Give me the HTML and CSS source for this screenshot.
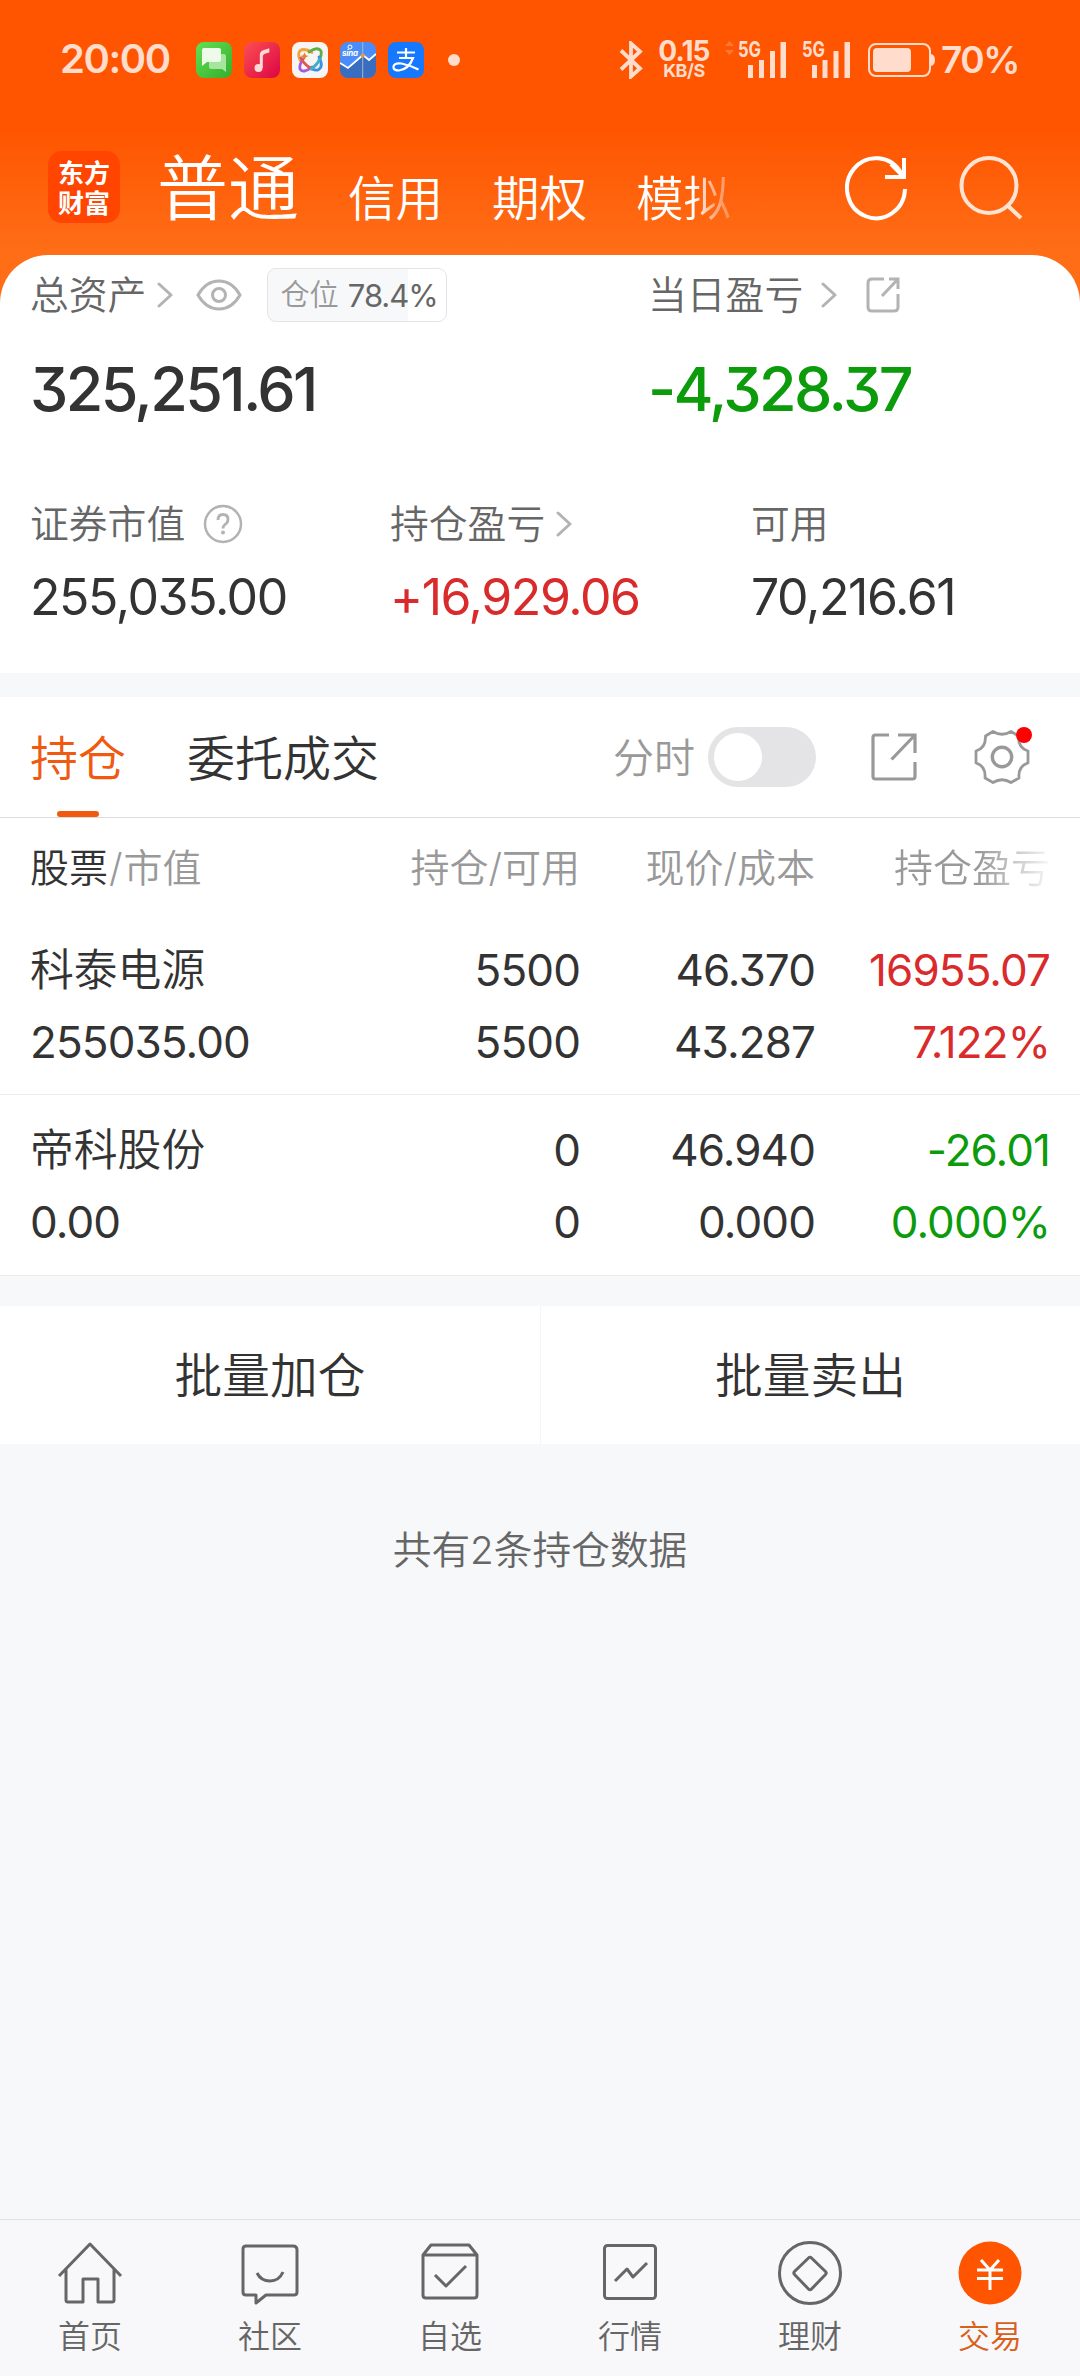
FILE: index.html
```html
<!DOCTYPE html>
<html lang="zh-CN">
<head>
<meta charset="utf-8">
<title>普通交易</title>
<link rel="stylesheet" href="styles.css">
</head>
<body>
<div class="app">
  <header class="top">
    <div class="status">
      <span class="clock">20:00</span>
      <div class="notes">
        <svg width="36" height="36" viewBox="0 0 36 36"><defs><linearGradient id="gm" x2="1" y2="1"><stop stop-color="#62e052"/><stop offset="1" stop-color="#35ad2b"/></linearGradient></defs><rect width="36" height="36" rx="8" fill="url(#gm)"/><path d="M15 12h13q2 0 2 2v16l-4-3H15q-2 0-2-2V14q0-2 2-2z" fill="#a5e59e"/><path d="M8 6h15q2 0 2 2v10q0 2-2 2H11l-5 4V8q0-2 2-2z" fill="#eefbea"/></svg>
        <svg width="36" height="36" viewBox="0 0 36 36"><defs><linearGradient id="gr" x2="1" y2="1"><stop stop-color="#fc5052"/><stop offset="1" stop-color="#dc0445"/></linearGradient></defs><rect width="36" height="36" rx="8" fill="url(#gr)"/><circle cx="14.500" cy="26" r="4" fill="#ffd9d8"/><path d="M15.800 26V13q0-4 4-5l5.500-1.800v4.300l-4.500 1.300q-2 .6-2 3V26z" fill="#ffd9d8"/></svg>
        <svg width="36" height="36" viewBox="0 0 36 36"><rect width="36" height="36" rx="8" fill="#f6f5f3"/><g fill="none" stroke-width="2.800" stroke-linecap="round"><path d="M8 18Q4 8 12 7.500q4 0 8 3" stroke="#f3a33a"/><path d="M17 10q9-6 12-1 1 4-2 9" stroke="#5fae45"/><path d="M27 15q5 10-1 13-4 1-9-3" stroke="#3a8fe8"/><path d="M20 25q-9 7-12 2-1-4 3-10" stroke="#a35be0"/><path d="M9 16Q11 21 18 26" stroke="#e0554c"/><path d="M28 17Q25 23 19 27" stroke="#3fb0c0"/></g><path d="M12.500 10.500l1.300 2.700 2.700.8-2.700 1.200-1.300 2.800-1.300-2.800-2.700-1.200 2.700-.8z" fill="#ee7a2b"/></svg>
        <svg width="36" height="36" viewBox="0 0 36 36"><defs><clipPath id="cs"><rect width="36" height="36" rx="8"/></clipPath></defs><g clip-path="url(#cs)"><rect width="36" height="36" fill="#4b8df8"/><path d="M0 21l8 5 15-13 6 5 7-6v24H0z" fill="#396dc0"/><path d="M0 21l8 5 15-13 6 5 7-6" fill="none" stroke="#fff" stroke-width="1.800"/><path d="M22.700 0v36" stroke="#a9b7c2" stroke-width="1"/><circle cx="22.700" cy="13.500" r="2" fill="#f29a1f"/><circle cx="10" cy="5" r="2" fill="none" stroke="#fff"/><text x="2" y="13.500" font-size="8" font-weight="700" font-style="italic" fill="#fff" textLength="16">sina</text></g></svg>
        <svg width="36" height="36" viewBox="0 0 36 36"><rect width="36" height="36" rx="8" fill="#1677ff"/><g fill="none" stroke="#fff" stroke-width="2.200"><path d="M9 10.500h18M18 6v10M11 16h14Q21 27 11 28.500q-6 0-5.500-4 1-4 8-3 9 2 17 6"/></g></svg>
      </div>
      <i class="more"></i>
      <div class="signals">
        <svg class="bt" width="24" height="38" viewBox="0 0 24 38" fill="none" stroke="#ffdccb" stroke-width="3.800"><path d="M2 9.500l19 18-9 8V2.500l9 8-19 18"/></svg>
        <div class="speed"><b>0.15</b><small>KB/S</small></div>
        <svg class="cell" width="62" height="40" viewBox="0 0 62 40"><path d="M0 6l4.500-5L9 6zM0 10h9l-4.500 5z" fill="#ff7a3a"/><text x="13" y="16.500" textLength="23" lengthAdjust="spacingAndGlyphs">5G</text><path d="M23 25h5v13h-5zM34 20h5v18h-5zM45 11h5v27h-5zM55.500 2h5.500v36h-5.500z"/></svg>
        <svg class="cell two" width="50" height="40" viewBox="0 0 50 40"><text x="1" y="16.500" textLength="23" lengthAdjust="spacingAndGlyphs">5G</text><path d="M11 25h5v13h-5zM21.500 20h5v18h-5zM32.500 11h5v27h-5zM43.500 2h5.500v36h-5.500z"/></svg>
        <svg class="batt" width="67" height="34" viewBox="0 0 67 34"><rect x="1" y="1" width="61" height="32" rx="7" fill="none" stroke="#ffdccb" stroke-width="2"/><rect x="5" y="5" width="38" height="24" rx="4" fill="#ffdccb"/><path d="M63 11q4 1 4 6t-4 6z" fill="#ffdccb"/></svg>
        <span class="pct">70%</span>
      </div>
    </div>
    <nav class="accounts">
      <div class="logo"><span>东方</span><span>财富</span></div>
      <b class="now">普通</b><span class="a1">信用</span><span class="a2">期权</span><span class="a3">模拟</span>
      <svg class="reload" width="64" height="66" viewBox="0 0 64 66" fill="none" stroke="#fff" stroke-width="4"><path d="M60 34A29 30 0 1 1 56 18"/><path d="M59 3v19H40M46 9L58 21"/></svg>
      <svg class="find" width="64" height="66" viewBox="0 0 64 66" fill="none" stroke="#ffe3d2" stroke-width="4"><circle cx="30" cy="30.500" r="27.500"/><path d="M48 50l14 13"/></svg>
    </nav>
  </header>

  <section class="assets">
    <div class="pair">
      <div class="total">
        <div class="label"><span>总资产</span><svg class="chev c1" width="17" height="26" viewBox="0 0 17 26"><path d="M2 2l12 11L2 24"/></svg>
          <svg class="eye" width="46" height="32" viewBox="0 0 46 32" fill="none" stroke="#b3b3b3" stroke-width="3"><path d="M2 16Q10 2 23 2t21 14Q36 30 23 30T2 16z"/><circle cx="23" cy="16" r="6.500"/></svg>
          <span class="ratio"><em>仓位</em><b>78.4%</b></span></div>
        <div class="big">325,251.61</div>
      </div>
      <div class="today">
        <div class="label"><span>当日盈亏</span><svg class="chev c2" width="17" height="26" viewBox="0 0 17 26"><path d="M2 2l12 11L2 24"/></svg>
          <svg class="out" width="34" height="36" viewBox="0 0 34 36" fill="none" stroke="#b3b3b3" stroke-width="3"><path d="M18 2H6Q2 2 2 6v24q0 4 4 4h22q4 0 4-4V17M23 2h9v10M32 2L16 19"/></svg></div>
        <div class="big down">-4,328.37</div>
      </div>
    </div>
    <div class="trio">
      <div><div class="label"><span>证券市值</span><svg class="help" width="40" height="40" viewBox="0 0 40 40" fill="none" stroke="#b3b3b3" stroke-width="2.500"><circle cx="20" cy="20" r="18"/><path d="M15 16q0-5.500 5-5.500t5 5q0 3-3 5-2 1.500-2 4" stroke-width="2.800"/><circle cx="20" cy="28.500" r="1" stroke-width="2"/></svg></div><div class="mid">255,035.00</div></div>
      <div><div class="label"><span>持仓盈亏</span><svg class="chev c3" width="17" height="26" viewBox="0 0 17 26"><path d="M2 2l12 11L2 24"/></svg></div><div class="mid up">+16,929.06</div></div>
      <div><div class="label"><span>可用</span></div><div class="mid">70,216.61</div></div>
    </div>
  </section>

  <section class="panel">
    <div class="tabs">
      <span class="tab on">持仓</span><span class="tab">委托成交</span>
      <span class="mode">分时</span><i class="switch"></i>
      <svg class="export" width="46" height="48" viewBox="0 0 46 48" fill="none" stroke="#999" stroke-width="3.200"><path d="M18 2H4.500Q2 2 2 4.500v39Q2 46 4.500 46h37q2.500 0 2.500-2.500V29M27 2h17v18M44 2L20.500 26.500"/></svg>
      <span class="gear"><svg width="56" height="56" viewBox="0 0 56 56" fill="none" stroke="#999" stroke-width="2.800"><path d="M19 2.500Q28 8 37 2.500L44.500 7Q44 19 54 22v12Q44 37 45 49L37 53.500Q28 48 19 53.500L11 49Q12 37 2 34V22Q12 19 11.500 7z" stroke-linejoin="round"/><circle cx="28" cy="28" r="9.700" stroke-width="3.400"/></svg></span>
    </div>
    <div class="grid head"><span><b>股票</b><i>/</i>市值</span><span>持仓/可用</span><span>现价/成本</span><span class="fade">持仓盈亏</span></div>
    <div class="grid row first">
      <span class="name">科泰电源</span><span>5500</span><span>46.370</span><span class="up">16955.07</span>
      <span>255035.00</span><span>5500</span><span>43.287</span><span class="up">7.122%</span>
    </div>
    <div class="grid row">
      <span class="name">帝科股份</span><span>0</span><span>46.940</span><span class="down">-26.01</span>
      <span>0.00</span><span>0</span><span>0.000</span><span class="down">0.000%</span>
    </div>
  </section>

  <div class="actions"><span>批量加仓</span><span>批量卖出</span></div>
  <p class="count">共有2条持仓数据</p>

  <nav class="bottom">
    <a><svg viewBox="0 0 66 66"><path d="M2 36L33 4l31 32M9 29v31q0 2 2 2h15V39h15v23h14q2 0 2-2V29"/></svg>首页</a>
    <a><svg viewBox="0 0 66 66"><path d="M8 6h48q4 0 4 4v42q0 3-3 3H29l-10 8v-8H9q-3 0-3-3V9q0-3 3-3M20 33q4 8 13 8t13-9"/></svg>社区</a>
    <a><svg viewBox="0 0 66 66"><path d="M6 15l8-10h38l8 10v40q0 3-3 3H9q-3 0-3-3zM6 15h54M18 35l11 11 20-20"/></svg>自选</a>
    <a><svg viewBox="0 0 66 66"><rect x="7.500" y="5.500" width="51" height="53" rx="3"/><path d="M18 41l12-12 6 8 14-14"/></svg>行情</a>
    <a><svg viewBox="0 0 66 66"><circle cx="33" cy="33" r="30.500"/><path d="M31.500 18q1.500-1.500 3 0l14 13.500q1.500 1.500 0 3L34.500 49q-1.500 1.500-3 0L17.500 34.500q-1.500-1.500 0-3z"/></svg>理财</a>
    <a class="on"><svg viewBox="0 0 66 66"><circle cx="33" cy="33" r="31.500"/><path d="M24 20l9 10 9-10M20 30h26M20 38.500h26M33 30v20"/></svg>交易</a>
  </nav>
</div>
</body>
</html>
```
FILE: styles.css
```css
* { box-sizing: border-box; }
body { margin: 0; }
.app {
  width: 1080px; height: 2376px; display: flex; flex-direction: column;
  background: #f7f8fa; color: #333; overflow: hidden;
  font-family: Inter, "Noto Sans CJK SC", sans-serif;
  font-feature-settings: "cv09";
  font-weight: 350; line-height: 1; white-space: nowrap;
}
svg { display: block; flex: none; }
b, em, small, i { font-weight: inherit; font-style: normal; }
.up { color: #d92b2b; }
.down { color: #0b9b0b; }

.top { height: 303px; background: linear-gradient(#ff5500 0 130px, #ff6d17 250px); flex: none; }
.status { height: 120px; display: flex; align-items: center; padding-left: 60px; color: #ffdccb; }
.clock { width: 136px; font-size: 40px; font-weight: 600; letter-spacing: -1.4px; margin-top: -2px; }
.notes { display: flex; gap: 12px; }
.more { width: 12px; height: 12px; border-radius: 50%; background: #ffdccb; margin-left: 24px; }
.signals { display: flex; align-items: center; margin-left: 159px; }
.speed { display: flex; flex-direction: column; align-items: center; width: 54px; margin-left: 14px; }
.speed b { font-size: 28px; line-height: 22px; font-weight: 700; letter-spacing: -.9px; }
.speed small { font-size: 18px; line-height: 18px; font-weight: 700; letter-spacing: -.5px; }
.cell { margin-left: 14px; fill: #ffdccb; font-size: 22px; font-weight: 700; overflow: visible; }
.batt { margin-left: 17px; }
.pct { font-size: 37px; font-weight: 600; margin-left: 6px; letter-spacing: -1.5px; margin-top: -1px; }

.accounts { height: 135px; display: flex; align-items: flex-start; padding-left: 48px; color: #fff; }
.logo { width: 72px; height: 72px; margin-top: 31px; border-radius: 14px; background: #ff4500; display: flex; flex-direction: column; align-items: center; justify-content: center; font: 700 26px/30px "Noto Sans CJK SC", sans-serif; }
.now { font-size: 71px; line-height: 80px; margin: 28px 0 0 37px; }
.a1, .a2, .a3 { font-size: 47.5px; line-height: 60px; margin: 49px 0 0 49px; }
.a3 { background: linear-gradient(90deg, #fff 60%, #ffb58e 80%, #ff8b4e); background-clip: text; color: transparent; }
.reload { margin: 35px 0 0 114px; }
.find { margin: 35px 0 0 50px; }

.assets { height: 418px; margin-top: -48px; background: #fff; border-radius: 48px 48px 0 0; flex: none; }
.pair { display: grid; grid-template-columns: 618px 1fr; padding: 13px 0 0 30px; }
.label { display: flex; align-items: center; height: 54px; font-size: 38.8px; color: #666; }
.chev { fill: none; stroke: #b3b3b3; stroke-width: 3; stroke-linecap: round; stroke-linejoin: round; }
.c1 { margin-left: 11px; }
.c2 { margin-left: 18px; }
.c3 { margin-left: 11px; }
.eye { margin-left: 22px; }
.ratio { display: flex; align-items: center; width: 180px; height: 54px; margin-left: 25px; padding-left: 12px; border: 1px solid #e4e4e6; border-radius: 9px; background: linear-gradient(90deg, #f7f8fa 78.4%, #fff 78.4%); font-size: 29.2px; }
.ratio em { color: #999; }
.ratio b { font-size: 31px; margin-left: 9px; font-weight: 400; letter-spacing: -1px; }
.out { margin-left: 28px; }
.big { font-size: 61px; line-height: 74px; font-weight: 500; margin-top: 30px; letter-spacing: -2.6px; }
.trio { display: grid; grid-template-columns: 360px 361px 1fr; padding: 71px 0 0 30px; }
.help { margin-left: 18px; }
.mid { font-size: 50px; line-height: 60px; font-weight: 400; margin-top: 16px; letter-spacing: -1.4px; }

.panel { background: #fff; margin-top: 24px; flex: none; }
.tabs { height: 121px; border-bottom: 1px solid #dcdcdc; display: flex; align-items: center; padding-left: 30px; }
.tab { height: 120px; line-height: 123px; font-size: 48px; margin-right: 61px; position: relative; }
.tab.on { color: #f0590f; }
.tab.on::after { content: ""; position: absolute; left: 27px; bottom: 0; width: 42px; height: 6px; border-radius: 3px; background: #f0590f; }
.mode { font-size: 41px; line-height: 62px; padding-top: 2px; color: #999; margin-left: 173px; width: 95px; }
.switch { width: 108px; height: 60px; border-radius: 30px; padding: 6px; background: #e4e4e6; }
.switch::before { content: ""; display: block; width: 48px; height: 48px; border-radius: 50%; background: #fff; }
.export { margin-left: 55px; }
.gear { position: relative; margin-left: 57px; }
.gear::after { content: ""; position: absolute; right: -2px; top: -2px; width: 16px; height: 16px; border-radius: 50%; background: #f00; }
.grid { display: grid; grid-template-columns: 340px 210px 235px 235px; padding: 0 30px; }
.grid > span:not(:nth-child(4n + 1)) { text-align: right; }
.head { height: 98px; line-height: 99px; font-size: 39px; color: #999; }
.head b { color: #333; }
.head i { margin: 0 1px; }
.fade { background: linear-gradient(90deg, #999 70%, #f4f4f4 99%); background-clip: text; color: transparent; }
.row { height: 181px; grid-template-rows: 72px 72px; padding-top: 19px; line-height: 72px; font-size: 44px; font-weight: 400; letter-spacing: -.9px; border-bottom: 1px solid #ececec; }
.row.first { height: 179px; padding-top: 18px; }
.row .name { font-size: 43.8px; line-height: 73px; font-weight: 350; letter-spacing: 0; }

.actions { display: grid; grid-template-columns: 1fr 1fr; height: 138px; margin-top: 30px; background: #fff; flex: none; }
.actions span { text-align: center; font-size: 47.7px; line-height: 140px; height: 138px; }
.actions span + span { border-left: 1px solid #f5f5f6; }
.count { margin: 76px 0 0; text-align: center; font-size: 38.7px; line-height: 60px; color: #666; }

.bottom { display: grid; grid-template-columns: repeat(6, 1fr); height: 157px; margin-top: auto; border-top: 1px solid #e0e2e4; background: #f8f8fa; flex: none; }
.bottom a { display: flex; flex-direction: column; align-items: center; font-size: 32px; line-height: 40px; padding-top: 20px; gap: 11px; color: #666; }
.bottom svg { width: 66px; height: 66px; fill: none; stroke: #666; stroke-width: 3; stroke-linejoin: round; }
.bottom .on { color: #d9601a; }
.bottom .on circle { fill: #ff5500; stroke: none; }
.bottom .on path { stroke: #fff; stroke-linejoin: miter; }
```
